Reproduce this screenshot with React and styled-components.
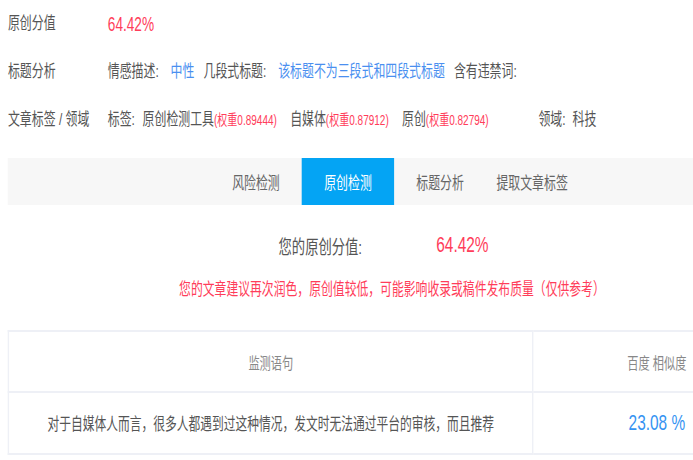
import React from "react";
import styled, { createGlobalStyle } from "styled-components";

// the reference is a wide page squeezed into a narrow shot, so the whole page is drawn at 0.7 across
const GlobalStyle = createGlobalStyle`
  html, body {
    margin: 0;
    padding: 0;
    background: #fff;
    overflow: hidden;
  }
  * {
    box-sizing: border-box;
  }
`;

const RED = "#ff3d5a";
const BLUE = "#4a8ff0";

const Page = styled.div`
  box-sizing: content-box;
  width: 1103px;
  padding-left: 11.4px;
  transform: scaleX(0.7);
  transform-origin: 0 0;
  font-family: "Liberation Sans", "Noto Sans CJK SC", sans-serif;
  color: #555;
`;

const InfoRow = styled.div`
  display: flex;
  align-items: center;
  height: 48px;
  font-size: 17px;
  line-height: 24px;
  white-space: nowrap;
`;

const RowLabel = styled.div`
  width: 142.6px;
  flex-shrink: 0;
`;

const BigScore = styled.span`
  font-size: 19.5px;
  color: ${RED};
`;

const Field = styled.span`
  margin-right: 13px;
`;

const Value = styled.span`
  margin-left: ${(p) => p.$gap || 17}px;
  color: ${(p) => (p.$tone === "blue" ? BLUE : "#555")};
`;

const TagList = styled.span`
  margin-left: 11px;
`;

const Tag = styled.span`
  margin-right: 19px;
`;

const Weight = styled.span`
  font-size: 14.3px;
  color: ${RED};
`;

const Domain = styled.span`
  margin-left: 52px;
`;

const TabBar = styled.nav`
  margin-top: 14px;
  height: 47px;
  display: flex;
  justify-content: center;
  background: #f7f7f7;
`;

const Tab = styled.div`
  width: 131.5px;
  display: flex;
  align-items: center;
  justify-content: center;
  font-size: 17px;
  color: ${(p) => (p.$active ? "#fff" : "#666")};
  background: ${(p) => (p.$active ? "#04a4f4" : "transparent")};
`;

const ScoreRow = styled.div`
  margin-top: 20px;
  height: 40px;
  display: flex;
  align-items: center;
  justify-content: center;
  gap: 106px;
  padding-right: 30px;
`;

const ScoreLabel = styled.span`
  font-size: 19px;
  color: #555;
`;

const ScoreValue = styled.span`
  font-size: 22px;
  color: ${RED};
`;

const Warning = styled.p`
  margin: 10px 0 0;
  height: 30px;
  line-height: 30px;
  padding-right: 6px;
  text-align: center;
  font-size: 16.9px;
  color: ${RED};
`;

const Table = styled.table`
  margin-top: 25px;
  width: 1103px;
  border-collapse: collapse;
  table-layout: fixed;
`;

const Th = styled.th`
  height: 61px;
  padding: 0;
  border: 2px solid #eef0f6;
  font-weight: normal;
  font-size: 16px;
  color: #888;
  text-align: center;
`;

const Td = styled.td`
  height: 62px;
  padding: 0;
  border: 2px solid #eef0f6;
  text-align: center;
  font-size: ${(p) => (p.$score ? 22 : 16.8)}px;
  color: ${(p) => (p.$score ? "#3593f2" : "#555")};
`;

const tabs = ["风险检测", "原创检测", "标题分析", "提取文章标签"];

const tags = [
  { name: "原创检测工具", weight: "0.89444" },
  { name: "自媒体", weight: "0.87912" },
  { name: "原创", weight: "0.82794" },
];

export default function App() {
  return (
    <>
      <GlobalStyle />
      <Page>
        <InfoRow>
          <RowLabel>原创分值</RowLabel>
          <BigScore>64.42%</BigScore>
        </InfoRow>
        <InfoRow>
          <RowLabel>标题分析</RowLabel>
          <Field>
            情感描述:<Value $tone="blue">中性</Value>
          </Field>
          <Field>
            几段式标题:<Value $tone="blue">该标题不为三段式和四段式标题</Value>
          </Field>
          <Field>含有违禁词:</Field>
        </InfoRow>
        <InfoRow>
          <RowLabel>文章标签 / 领域</RowLabel>
          标签:
          <TagList>
            {tags.map((t) => (
              <Tag key={t.name}>
                {t.name}
                <Weight>(权重{t.weight})</Weight>
              </Tag>
            ))}
          </TagList>
          <Domain>
            领域:<Value $gap={10}>科技</Value>
          </Domain>
        </InfoRow>

        <TabBar>
          {tabs.map((t) => (
            <Tab key={t} $active={t === "原创检测"}>
              {t}
            </Tab>
          ))}
        </TabBar>

        <ScoreRow>
          <ScoreLabel>您的原创分值:</ScoreLabel>
          <ScoreValue>64.42%</ScoreValue>
        </ScoreRow>
        <Warning>您的文章建议再次润色，原创值较低，可能影响收录或稿件发布质量（仅供参考）</Warning>

        <Table>
          <colgroup>
            <col style={{ width: 749 }} />
            <col style={{ width: 354 }} />
          </colgroup>
          <thead>
            <tr>
              <Th>监测语句</Th>
              <Th>百度 相似度</Th>
            </tr>
          </thead>
          <tbody>
            <tr>
              <Td>对于自媒体人而言，很多人都遇到过这种情况，发文时无法通过平台的审核，而且推荐</Td>
              <Td $score>23.08 %</Td>
            </tr>
          </tbody>
        </Table>
      </Page>
    </>
  );
}
